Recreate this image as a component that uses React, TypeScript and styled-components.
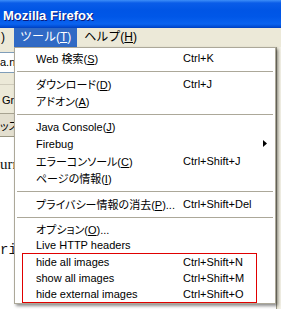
import React from "react";
import styled, { createGlobalStyle } from "styled-components";

const Global = createGlobalStyle`
  html, body { margin: 0; padding: 0; background: #fff; overflow: hidden; }
  #root { width: 281px; height: 309px; }
`;

const Window = styled.div`
  position: relative;
  width: 281px;
  height: 309px;
  overflow: hidden;
  background: #fff;
  font-family: "Liberation Sans", "Noto Sans CJK JP", sans-serif;
`;

const TitleBar = styled.div`
  height: 28px;
  display: flex;
  align-items: center;
  padding-left: 3px;
  background: linear-gradient(
    to bottom,
    #3d8ef8 0px,
    #0a5ce8 3px,
    #0055e5 10px,
    #0057e8 17px,
    #0a63ef 24px,
    #004ad0 27px,
    #003dbb 28px
  );
`;

const Title = styled.span`
  color: #fff;
  font: bold 13px "Liberation Sans", sans-serif;
  text-shadow: 1px 1px 0 #0a1a7a;
  padding-top: 2px;
`;

const MenuBar = styled.div`
  height: 19px;
  display: flex;
  background: #ece9d8;
  font-size: 12px;
  color: #000;
`;

const BarItem = styled.div<{ $active?: boolean }>`
  height: 19px;
  line-height: 19px;
  padding: ${(p) => (p.$active ? "0 6px" : "0 7px")};
  white-space: nowrap;
  background: ${(p) => (p.$active ? "#316ac5" : "transparent")};
  color: ${(p) => (p.$active ? "#fff" : "#000")};
`;

const PartialItem = styled.div`
  width: 14px;
  height: 19px;
  line-height: 19px;
  padding-left: 1px;
  box-sizing: border-box;
  overflow: hidden;
`;

const Body = styled.div`
  display: grid;
  grid-template-columns: 1fr 5px;
`;

const Main = styled.div`
  min-width: 0;
`;

const SideEdge = styled.div`
  background: linear-gradient(to right, #9d9a8a 0, #9d9a8a 1px, #ece9d8 1px, #f4f2e8 100%);
`;

const NavBar = styled.div`
  height: 38px;
  background: #ece9d8;
  padding-top: 5px;
  box-sizing: border-box;
  border-bottom: 1px solid #d0ccbc;
`;

const UrlField = styled.div`
  height: 19px;
  background: #fff;
  border-top: 1px solid #7f9db9;
  border-bottom: 1px solid #7f9db9;
  font-size: 11px;
  line-height: 19px;
  color: #000;
  white-space: nowrap;
`;

const BookmarkBar = styled.div`
  height: 28px;
  background: #ece9d8;
  font-size: 11px;
  line-height: 30px;
  padding-left: 2px;
  border-bottom: 1px solid #a7a391;
  white-space: nowrap;
`;

const TabStrip = styled.div`
  height: 22px;
  background: #e3dfcf;
  border-bottom: 1px solid #9a9784;
  font-size: 11px;
  line-height: 24px;
  white-space: nowrap;
  font-feature-settings: "palt";
`;

const Page = styled.div`
  height: 180px;
  padding-top: 18px;
  box-sizing: border-box;
  font-family: "Liberation Serif", serif;
  font-size: 15px;
  color: #111;
`;

const PageLine = styled.div<{ $gap: number }>`
  margin-top: ${(p) => p.$gap}px;
  height: 18px;
  line-height: 18px;
  white-space: nowrap;
`;

const MonoLine = styled(PageLine)`
  font-family: "Liberation Mono", monospace;
  font-size: 14px;
`;

const Menu = styled.div`
  position: absolute;
  left: 14px;
  top: 47px;
  width: 262px;
  box-sizing: border-box;
  background: #fff;
  border: 1px solid #aca899;
  padding-top: 1px;
  box-shadow: 2px 2px 3px rgba(0, 0, 0, 0.45);
  font-size: 11px;
  color: #000;
  font-feature-settings: "palt";
`;

const Item = styled.div<{ $compact?: boolean }>`
  display: grid;
  grid-template-columns: 147px 1fr 12px;
  align-items: center;
  height: ${(p) => (p.$compact ? 16 : 17)}px;
  padding-left: 21px;
  white-space: nowrap;
`;

const Label = styled.span`
  overflow: hidden;
`;

const Shortcut = styled.span`
  font-family: "Liberation Sans", sans-serif;
`;

const Arrow = styled.svg`
  display: block;
`;

const Separator = styled.div`
  height: 1px;
  margin: 5px 2px 3px;
  background: #aca899;
`;

const Highlight = styled.div`
  margin: 0 18px 0 7px;
  border: 1px solid #e00000;
  ${Item} {
    padding-left: 13px;
  }
`;

type Entry = { label: React.ReactNode; shortcut?: string; sub?: boolean; compact?: boolean };

const M = ({ k }: { k: string }) => <u>{k}</u>;

const groups: Entry[][] = [
  [{ label: <>Web 検索(<M k="S" />)</>, shortcut: "Ctrl+K" }],
  [
    { label: <>ダウンロード(<M k="D" />)</>, shortcut: "Ctrl+J" },
    { label: <>アドオン(<M k="A" />)</> },
  ],
  [
    { label: <>Java Console(<M k="J" />)</> },
    { label: "Firebug", sub: true },
    { label: <>エラーコンソール(<M k="C" />)</>, shortcut: "Ctrl+Shift+J" },
    { label: <>ページの情報(<M k="I" />)</> },
  ],
  [{ label: <>プライバシー情報の消去(<M k="P" />)...</>, shortcut: "Ctrl+Shift+Del" }],
  [
    { label: <>オプション(<M k="O" />)...</>, compact: true },
    { label: "Live HTTP headers", compact: true },
  ],
];

const marked: Entry[] = [
  { label: "hide all images", shortcut: "Ctrl+Shift+N", compact: true },
  { label: "show all images", shortcut: "Ctrl+Shift+M", compact: true },
  { label: "hide external images", shortcut: "Ctrl+Shift+O", compact: true },
];

const MenuRow = ({ e }: { e: Entry }) => (
  <Item $compact={e.compact}>
    <Label>{e.label}</Label>
    <Shortcut>{e.shortcut ?? ""}</Shortcut>
    {e.sub ? (
      <Arrow width="4" height="7" viewBox="0 0 4 7">
        <path d="M0 0 L4 3.5 L0 7 Z" fill="#000" />
      </Arrow>
    ) : (
      <span />
    )}
  </Item>
);

export default function App() {
  return (
    <Window>
      <Global />
      <TitleBar>
        <Title>Mozilla Firefox</Title>
      </TitleBar>
      <MenuBar>
        <PartialItem>)</PartialItem>
        <BarItem $active>
          ツール(<u>T</u>)
        </BarItem>
        <BarItem>
          ヘルプ(<u>H</u>)
        </BarItem>
      </MenuBar>
      <Body>
        <Main>
          <NavBar>
            <UrlField>a.net</UrlField>
          </NavBar>
          <BookmarkBar>Gr</BookmarkBar>
          <TabStrip>ッス</TabStrip>
          <Page>
            <PageLine $gap={0}>urr</PageLine>
            <MonoLine $gap={68}>rip</MonoLine>
          </Page>
        </Main>
        <SideEdge />
      </Body>
      <Menu>
        {groups.map((g, i) => (
          <React.Fragment key={i}>
            {i > 0 && <Separator />}
            {g.map((e, j) => (
              <MenuRow key={j} e={e} />
            ))}
          </React.Fragment>
        ))}
        <Highlight>
          {marked.map((e, j) => (
            <MenuRow key={j} e={e} />
          ))}
        </Highlight>
      </Menu>
    </Window>
  );
}
